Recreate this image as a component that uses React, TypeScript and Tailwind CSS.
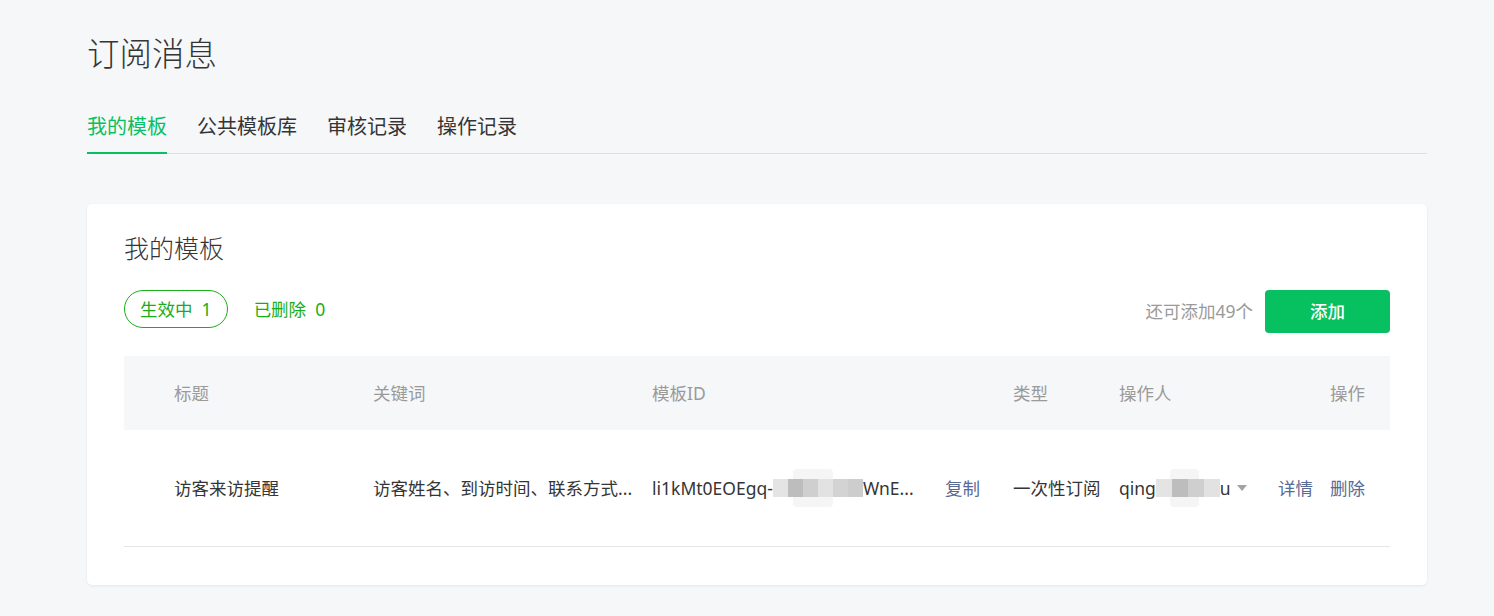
import React from "react";

const FONT = '"Noto Sans", "Noto Sans CJK SC", sans-serif';

function Blur({ w }: { w: number }) {
  const cols = ["#e4e4e4", "#bdbdbd", "#cfcfcf", "#e2e2e2", "#d3d3d3", "#cdcdcd"];
  const n = Math.max(1, Math.round(w / 15));
  return (
    <span className="relative inline-flex h-[18px] items-stretch align-middle" style={{ width: w }}>
      <span className="absolute left-[22%] top-[-10px] h-[38px] w-[45%] rounded-[4px] bg-[#f5f5f5]" />
      {Array.from({ length: n }).map((_, i) => (
        <span key={i} className="relative flex-1" style={{ background: cols[i % cols.length] }} />
      ))}
    </span>
  );
}

export default function App() {
  return (
    <div className="min-h-screen w-full bg-[#f6f7f9] text-[#353535]" style={{ fontFamily: FONT }}>
      <div className="ml-[87px] w-[1340px] pt-[30px]">
        <h1 className="h-[48px] text-[32.5px] leading-[48px] font-light">订阅消息</h1>

        <div className="mt-[32px] flex gap-[30px] border-b border-[#e0e0e0]">
          <div className="-mb-px border-b-2 border-[#07c160] pb-[8px] text-[20px] leading-[34px] text-[#07c160]">我的模板</div>
          <div className="-mb-px border-b-2 border-transparent pb-[8px] text-[20px] leading-[34px]">公共模板库</div>
          <div className="-mb-px border-b-2 border-transparent pb-[8px] text-[20px] leading-[34px]">审核记录</div>
          <div className="-mb-px border-b-2 border-transparent pb-[8px] text-[20px] leading-[34px]">操作记录</div>
        </div>

        <div className="mt-[50px] rounded-[5px] bg-white px-[37px] pt-[26px] pb-[38px] shadow-[0_1px_3px_rgba(0,0,0,0.07)]">
          <h2 className="text-[25px] leading-[36px] font-light">我的模板</h2>

          <div className="mt-[24px] flex items-start justify-between">
            <div className="flex items-center gap-[26px] text-[17.5px] text-[#1aad19]">
              <div className="flex h-[38px] items-center rounded-full border border-[#1aad19] px-[15px]">生效中&nbsp;&nbsp;1</div>
              <div className="flex h-[38px] items-center">已删除&nbsp;&nbsp;0</div>
            </div>
            <div className="flex items-center gap-[12px]">
              <span className="text-[17.5px] text-[#9a9a9a]">还可添加49个</span>
              <button className="h-[43px] w-[125px] rounded-[4px] bg-[#07c160] text-[17.5px] font-medium text-white">添加</button>
            </div>
          </div>

          <div className="mt-[23px] text-[17.5px]">
            <div className="grid h-[74px] grid-cols-[249px_279px_361px_106px_1fr_auto] items-center bg-[#f6f7f9] text-[#9a9a9a]">
              <div className="pl-[50px]">标题</div>
              <div>关键词</div>
              <div>模板ID</div>
              <div>类型</div>
              <div>操作人</div>
              <div className="pr-[25px] text-right">操作</div>
            </div>
            <div className="grid h-[117px] grid-cols-[249px_279px_361px_106px_1fr_auto] items-center border-b border-[#e5e5e5]">
              <div className="pl-[50px]">访客来访提醒</div>
              <div className="whitespace-nowrap">访客姓名、到访时间、联系方式...</div>
              <div className="flex items-center whitespace-nowrap">
                <span className="flex w-[293px] items-center">
                  <span>li1kMt0EOEgq-</span>
                  <Blur w={90} />
                  <span>WnE...</span>
                </span>
                <span className="text-[#576b95]">复制</span>
              </div>
              <div className="whitespace-nowrap">一次性订阅</div>
              <div className="flex items-center whitespace-nowrap">
                <span>qing</span>
                <Blur w={64} />
                <span>u</span>
                <svg className="ml-[6px]" width="10" height="6" viewBox="0 0 10 6">
                  <path d="M0 0 L10 0 L5 6 Z" fill="#a3a3a3" />
                </svg>
              </div>
              <div className="flex gap-[17px] pr-[25px] text-[#576b95]">
                <span>详情</span>
                <span>删除</span>
              </div>
            </div>
          </div>
        </div>
      </div>
    </div>
  );
}
